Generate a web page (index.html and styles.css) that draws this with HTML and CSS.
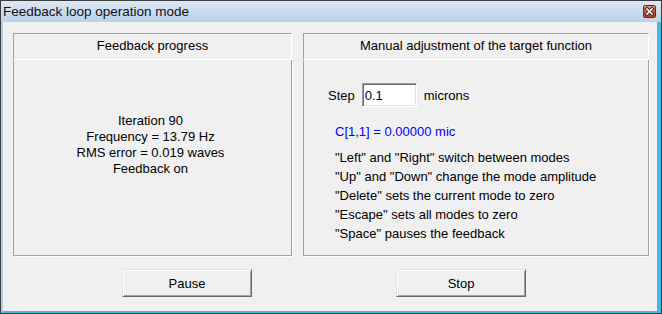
FILE: index.html
```html
<!DOCTYPE html>
<html lang="en">

<head>
    <title>Feedback loop operation mode</title>
    <meta charset="utf-8">
    <link rel="stylesheet" href="styles.css">
</head>

<body>

    <div class="window">

        <div class="titlebar">
            <span class="title">Feedback loop operation mode</span>
            <div class="close">
                <svg width="11" height="11" viewBox="0 0 11 11">
                    <path d="M3 3 L8 8 M8 3 L3 8" stroke="#4a1c16" stroke-width="3.4" stroke-linecap="square" />
                    <path d="M3 3 L8 8 M8 3 L3 8" stroke="#ffffff" stroke-width="1.6" stroke-linecap="square" />
                </svg>
            </div>
        </div>

        <div class="frame">
            <div class="client">

                <div class="panels">

                    <section class="panel panel-progress">
                        <div class="panel-head">Feedback progress</div>
                        <div class="panel-body progress-body">
                            <div>Iteration 90</div>
                            <div>Frequency = 13.79 Hz</div>
                            <div>RMS error = 0.019 waves</div>
                            <div>Feedback on</div>
                        </div>
                    </section>

                    <section class="panel panel-manual">
                        <div class="panel-head">Manual adjustment of the target function</div>
                        <div class="panel-body manual-body">
                            <div class="step-row">
                                <label for="step">Step</label>
                                <input id="step" class="step-input" value="0.1">
                                <span class="units">microns</span>
                            </div>
                            <div class="coef">C[1,1] = 0.00000 mic</div>
                            <ul class="keys">
                                <li>"Left" and "Right" switch between modes</li>
                                <li>"Up" and "Down" change the mode amplitude</li>
                                <li>"Delete" sets the current mode to zero</li>
                                <li>"Escape" sets all modes to zero</li>
                                <li>"Space" pauses the feedback</li>
                            </ul>
                        </div>
                    </section>

                </div>

                <div class="buttons">
                    <button class="btn">Pause</button>
                    <button class="btn btn-stop">Stop</button>
                </div>

            </div>
        </div>

    </div>

</body>

</html>
```

FILE: styles.css
```css
body {
    margin: 0;
    font-family: "Liberation Sans", Arial, sans-serif;
    font-size: 13px;
    color: #000;
}

.window {
    width: 662px;
    height: 314px;
    box-sizing: border-box;
    border: 1px solid #3c3c3c;
    display: flex;
    flex-direction: column;
    background: #b9d1ea;
}

.titlebar {
    height: 21px;
    flex: none;
    display: flex;
    align-items: center;
    padding: 0 5px 0 2px;
    background: linear-gradient(#dce7f4, #bad1ea);
}

.title {
    flex: 1;
    font-size: 13.5px;
    color: #101018;
    padding-bottom: 1px;
}

.close {
    width: 13px;
    height: 13px;
    box-sizing: border-box;
    border: 1px solid #5c2a24;
    border-radius: 2px;
    background: linear-gradient(#e29a86, #c2553f 55%, #b0402c);
    display: flex;
    align-items: center;
    justify-content: center;
}

.close svg {
    display: block;
}

.frame {
    flex: 1;
    display: flex;
    border-left: 2px solid #b3cde9;
    border-right: 4px solid #45b8e8;
    border-bottom: 2px solid #45b8e8;
}

.client {
    flex: 1;
    background: #f0f0f0;
}

.panels {
    display: flex;
    gap: 11px;
    padding: 11px 0 0 10px;
}

.panel-progress {
    width: 279px;
}

.panel-manual {
    width: 346px;
}

.panel-head {
    height: 27px;
    box-sizing: border-box;
    border-top: 1px solid #a0a0a0;
    border-left: 1px solid #a0a0a0;
    border-right: 1px solid #fff;
    border-bottom: 1px solid #fff;
    display: flex;
    align-items: center;
    justify-content: center;
    line-height: 16px;
    padding-bottom: 2px;
}

.panel-body {
    height: 196px;
    box-sizing: border-box;
    border: 1px solid #a0a0a0;
    border-top: none;
    box-shadow: 1px 1px 0 #fff;
}

.progress-body {
    padding: 53px 4px 0 0;
    text-align: center;
    line-height: 16px;
}

.manual-body {
    padding: 23px 0 0 24px;
}

.step-row {
    display: flex;
    align-items: center;
    height: 24px;
}

.step-input {
    width: 55px;
    height: 24px;
    box-sizing: border-box;
    margin: 0 7px;
    padding: 0 2px;
    font: inherit;
    border: 1px solid;
    border-color: #a0a0a0 #fff #fff #a0a0a0;
    box-shadow: inset 1px 1px 0 #696969, inset -1px -1px 0 #e3e3e3;
    background: #fff;
    outline: none;
}

.coef {
    color: #0000ff;
    margin: 15px 0 0 7px;
    line-height: 19px;
}

.keys {
    list-style: none;
    margin: 7px 0 0 7px;
    padding: 0;
    line-height: 19px;
}

.buttons {
    display: flex;
    gap: 144px;
    padding: 13px 0 0 119px;
}

.btn {
    width: 130px;
    height: 28px;
    box-sizing: border-box;
    margin: 0;
    padding: 0;
    font: inherit;
    color: #000;
    background: #f0f0f0;
    border: 1px solid;
    border-color: #e3e3e3 #696969 #696969 #e3e3e3;
    box-shadow: inset 1px 1px 0 #fff, inset -1px -1px 0 #a0a0a0;
}
```
